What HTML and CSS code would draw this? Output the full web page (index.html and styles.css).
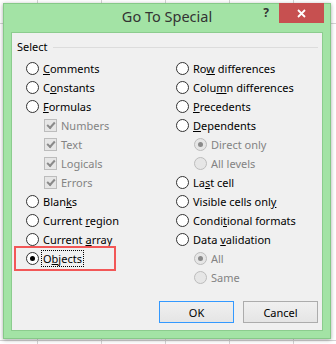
FILE: index.html
```html
<!DOCTYPE html>
<html>
<head>
    <meta charset="utf-8">
    <title>Go To Special</title>
    <link rel="stylesheet" href="styles.css">
</head>
<body>
<div class="window">
    <div class="titlebar">
        <h1 class="title">Go To Special</h1>
        <div class="controls">
            <span class="help">?</span>
            <span class="close">
                <svg width="9" height="9" viewBox="0 0 9 9"><path d="M1 1 L8 8 M8 1 L1 8" stroke="#fff" stroke-width="1.8" fill="none"/></svg>
            </span>
        </div>
    </div>

    <div class="client">
        <div class="group">
            <span class="legend">Select</span>
            <span class="rule"></span>
        </div>

        <div class="columns">
            <ul class="col">
                <li class="opt"><span class="radio"></span><span><u>C</u>omments</span></li>
                <li class="opt"><span class="radio"></span><span>C<u>o</u>nstants</span></li>
                <li class="opt"><span class="radio"></span><span><u>F</u>ormulas</span></li>
                <li class="opt sub disabled"><span class="check on"></span><span>Numbers</span></li>
                <li class="opt sub disabled"><span class="check on"></span><span>Text</span></li>
                <li class="opt sub disabled"><span class="check on"></span><span>Logicals</span></li>
                <li class="opt sub disabled"><span class="check on"></span><span>Errors</span></li>
                <li class="opt"><span class="radio"></span><span>Blan<u>k</u>s</span></li>
                <li class="opt"><span class="radio"></span><span>Current <u>r</u>egion</span></li>
                <li class="opt"><span class="radio"></span><span>Current <u>a</u>rray</span></li>
                <li class="opt marked"><span class="radio on"></span><span class="focus">O<u>b</u>jects</span></li>
            </ul>
            <ul class="col">
                <li class="opt"><span class="radio"></span><span>Ro<u>w</u> differences</span></li>
                <li class="opt"><span class="radio"></span><span>Colu<u>m</u>n differences</span></li>
                <li class="opt"><span class="radio"></span><span><u>P</u>recedents</span></li>
                <li class="opt"><span class="radio"></span><span><u>D</u>ependents</span></li>
                <li class="opt sub disabled"><span class="radio on"></span><span>Direct only</span></li>
                <li class="opt sub disabled"><span class="radio"></span><span>All levels</span></li>
                <li class="opt"><span class="radio"></span><span>La<u>s</u>t cell</span></li>
                <li class="opt"><span class="radio"></span><span>Visible cells onl<u>y</u></span></li>
                <li class="opt"><span class="radio"></span><span>Condi<u>t</u>ional formats</span></li>
                <li class="opt"><span class="radio"></span><span>Data <u>v</u>alidation</span></li>
                <li class="opt sub disabled"><span class="radio on"></span><span>All</span></li>
                <li class="opt sub disabled"><span class="radio"></span><span>Same</span></li>
            </ul>
        </div>

        <div class="buttons">
            <button class="btn default">OK</button>
            <button class="btn">Cancel</button>
        </div>
    </div>
</div>
</body>
</html>
```

FILE: styles.css
```css
body {
    margin: 0;
    padding: 0;
    height: 344px;
    overflow: hidden;
    font: 11px "Noto Sans", sans-serif;
    color: #000;
    background-color: #fff;
    background-image:
        linear-gradient(#d4d4d4, #d4d4d4),
        linear-gradient(#d4d4d4, #d4d4d4),
        linear-gradient(90deg, #d4d4d4 1px, transparent 1px);
    background-position: 0 23px, 0 340px, 37px 0;
    background-size: 100% 1px, 100% 1px, 64px 100%;
    background-repeat: no-repeat, no-repeat, repeat;
}

.window {
    box-sizing: border-box;
    width: 328px;
    height: 336px;
    margin: 3px 0 0 3px;
    background: #a3e3a5;
    border: 1px solid #86c988;
    box-shadow: 0 1px 4px rgba(0, 0, 0, 0.35);
    display: flex;
    flex-direction: column;
}

.titlebar {
    height: 28px;
    display: grid;
    grid-template-columns: 1fr auto 1fr;
    align-items: start;
}

.title {
    grid-column: 2;
    margin: 0;
    font-size: 14.5px;
    font-weight: normal;
    line-height: 24px;
    color: #333;
}

.controls {
    justify-self: end;
    display: flex;
    align-items: flex-start;
    margin-right: 6px;
}

.help {
    font-weight: bold;
    font-size: 12px;
    line-height: 18px;
    color: #333;
    margin-right: 10px;
}

.close {
    width: 45px;
    height: 20px;
    margin-top: -1px;
    background: #c75050;
    display: flex;
    align-items: center;
    justify-content: center;
}

.client {
    flex: 1;
    margin: 0 7px 7px 7px;
    background: #f0f0f0;
    border: 1px solid #8ccc8e;
    display: flex;
    flex-direction: column;
}

.group {
    display: flex;
    align-items: center;
    gap: 5px;
    margin-top: 6px;
    padding: 0 4px 0 5px;
    line-height: 16px;
}

.rule {
    flex: 1;
    height: 1px;
    background: #dcdcdc;
}

.columns {
    display: grid;
    grid-template-columns: 150px 1fr;
    margin-top: 4px;
    padding-left: 14px;
}

.col {
    list-style: none;
    margin: 0;
    padding: 0;
}

.opt {
    height: 19px;
    display: flex;
    align-items: center;
    white-space: nowrap;
}

.opt.sub {
    padding-left: 18px;
}

.opt.disabled {
    color: #838383;
}

.radio,
.check {
    box-sizing: border-box;
    width: 13px;
    height: 13px;
    margin-right: 4px;
    flex: none;
    background: #fff;
    border: 1px solid #333;
    display: flex;
    align-items: center;
    justify-content: center;
}

.radio {
    border-radius: 50%;
}

.radio.on::before {
    content: "";
    width: 5px;
    height: 5px;
    border-radius: 50%;
    background: #000;
}

.disabled .radio,
.disabled .check {
    background: #e6e6e6;
    border-color: #bcbcbc;
}

.disabled .radio.on::before {
    background: #8a8a8a;
}

.check.on::before {
    content: "";
    width: 6px;
    height: 3px;
    margin-top: -2px;
    border-left: 2px solid #8a8a8a;
    border-bottom: 2px solid #8a8a8a;
    transform: rotate(-48deg);
}

.marked {
    position: relative;
}

.marked::after {
    content: "";
    position: absolute;
    box-sizing: border-box;
    left: -12px;
    top: -3px;
    width: 102px;
    height: 25px;
    border: 2px solid #f25757;
}

.focus {
    outline: 1px dotted #000;
    padding: 0 1px;
    margin-left: -1px;
    line-height: 15px;
}

.buttons {
    display: flex;
    justify-content: flex-end;
    gap: 9px;
    margin-top: 14px;
    padding-right: 4px;
}

.btn {
    box-sizing: border-box;
    width: 75px;
    height: 22px;
    padding: 0;
    font: 11px "Noto Sans", sans-serif;
    color: #000;
    background: linear-gradient(#f0f0f0, #e5e5e5);
    border: 1px solid #acacac;
}

.btn.default {
    border-color: #3399ff;
}
```
